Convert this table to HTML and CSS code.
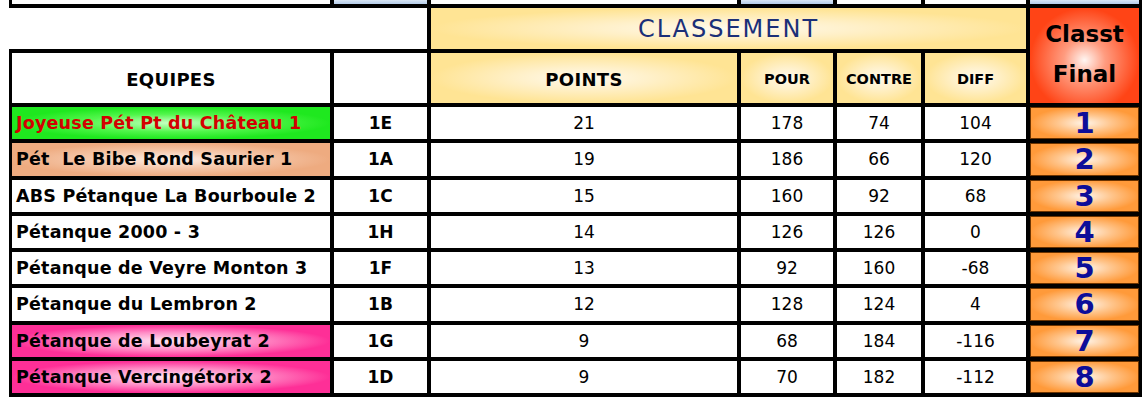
FILE: index.html
```html
<!DOCTYPE html>
<html lang="fr">
<head>
<meta charset="utf-8">
<title>Classement</title>
<link rel="stylesheet" href="styles.css">
</head>
<body>
<div class="sheet">
  <div class="c white"></div>
  <div class="c blue"></div>
  <div class="c white"></div>
  <div class="c blue"></div>
  <div class="c white"></div>
  <div class="c white"></div>
  <div class="c blue"></div>

  <div class="c white blank-top"></div>
  <div class="c yellow classement">CLASSEMENT</div>
  <div class="c final"><span>Classt</span><span>Final</span></div>

  <div class="c white hdr hdr-big">EQUIPES</div>
  <div class="c white"></div>
  <div class="c yellow hdr hdr-big">POINTS</div>
  <div class="c yellow hdr hdr-small">POUR</div>
  <div class="c yellow hdr hdr-small">CONTRE</div>
  <div class="c yellow hdr hdr-small">DIFF</div>

  <div class="c team green red-text">Joyeuse Pét Pt du Château 1</div>
  <div class="c code">1E</div>
  <div class="c num">21</div><div class="c num">178</div><div class="c num">74</div><div class="c num">104</div>
  <div class="c rank">1</div>

  <div class="c team salmon">Pét&nbsp; Le Bibe Rond Saurier 1</div>
  <div class="c code">1A</div>
  <div class="c num">19</div><div class="c num">186</div><div class="c num">66</div><div class="c num">120</div>
  <div class="c rank">2</div>

  <div class="c team">ABS Pétanque La Bourboule 2</div>
  <div class="c code">1C</div>
  <div class="c num">15</div><div class="c num">160</div><div class="c num">92</div><div class="c num">68</div>
  <div class="c rank">3</div>

  <div class="c team">Pétanque 2000 - 3</div>
  <div class="c code">1H</div>
  <div class="c num">14</div><div class="c num">126</div><div class="c num">126</div><div class="c num">0</div>
  <div class="c rank">4</div>

  <div class="c team">Pétanque de Veyre Monton 3</div>
  <div class="c code">1F</div>
  <div class="c num">13</div><div class="c num">92</div><div class="c num">160</div><div class="c num">-68</div>
  <div class="c rank">5</div>

  <div class="c team">Pétanque du Lembron 2</div>
  <div class="c code">1B</div>
  <div class="c num">12</div><div class="c num">128</div><div class="c num">124</div><div class="c num">4</div>
  <div class="c rank">6</div>

  <div class="c team pink">Pétanque de Loubeyrat 2</div>
  <div class="c code">1G</div>
  <div class="c num">9</div><div class="c num">68</div><div class="c num">184</div><div class="c num">-116</div>
  <div class="c rank">7</div>

  <div class="c team pink">Pétanque Vercingétorix 2</div>
  <div class="c code">1D</div>
  <div class="c num">9</div><div class="c num">70</div><div class="c num">182</div><div class="c num">-112</div>
  <div class="c rank">8</div>
</div>
</body>
</html>
```

FILE: styles.css
```css
html, body {
  margin: 0;
  padding: 0;
  background: #ffffff;
}

body {
  font-family: "DejaVu Sans", "Liberation Sans", sans-serif;
  color: #000000;
}

.sheet {
  margin-left: 9px;
  width: 1133px;
  box-sizing: border-box;
  display: grid;
  grid-template-columns: 318px 93px 306px 92px 84px 101px 109px;
  grid-template-rows: 4px 41px 50px repeat(8, 32.25px);
  column-gap: 4px;
  row-gap: 4px;
  padding: 0 3px 4px 3px;
  background: #000000;
}

.c {
  display: flex;
  align-items: center;
  justify-content: center;
  background: #ffffff;
  min-width: 0;
  overflow: hidden;
  white-space: nowrap;
}

.white { background: #ffffff; }

.blue {
  background: linear-gradient(#d9e6f5, #b4cce9);
}

.blank-top {
  grid-column: 1 / 3;
  margin-left: -3px;
}

.yellow {
  background: radial-gradient(ellipse farthest-side at 50% 50%, #fffaee 0%, #fff0c8 45%, #ffe494 100%);
}

.classement {
  grid-column: 3 / 7;
  color: #1b2f78;
  font-size: 24px;
  letter-spacing: 2px;
  padding-top: 1px;
}

.final {
  grid-column: 7;
  grid-row: 2 / 4;
  flex-direction: column;
  font-weight: bold;
  font-size: 23px;
  line-height: 40px;
  padding-bottom: 4px;
  text-align: center;
  background: radial-gradient(ellipse farthest-side at 50% 55%, #fff6f2 0%, #ff9c80 38%, #ff4416 100%);
}

.hdr { padding-top: 2px; }
.hdr-big { font-size: 18px; font-weight: bold; letter-spacing: 0.3px; }
.hdr-small { font-size: 14.5px; font-weight: bold; }

.team {
  justify-content: flex-start;
  padding-left: 4px;
  font-size: 17.5px;
  font-weight: bold;
  letter-spacing: 0.2px;
}

.red-text { color: #d40000; }

.green {
  background: radial-gradient(ellipse farthest-side at 50% 50%, #c9ffc6 0%, #52f64c 55%, #1fe81f 100%);
}

.salmon {
  background: radial-gradient(ellipse farthest-side at 50% 50%, #fdf0e8 0%, #f5c6a8 55%, #eeab80 100%);
}

.pink {
  background: radial-gradient(ellipse farthest-side at 50% 50%, #ffe6f3 0%, #ff8cc6 55%, #fe2f97 100%);
}

.code {
  font-size: 17px;
  font-weight: bold;
}

.num {
  font-size: 17px;
}

.rank {
  font-size: 29px;
  font-weight: bold;
  color: #0d0d99;
  background: radial-gradient(ellipse farthest-side at 50% 50%, #fff5ea 0%, #ffc58c 50%, #ff9a3a 100%);
  box-shadow: inset 0 0 0 1px #6b3300;
}
```
